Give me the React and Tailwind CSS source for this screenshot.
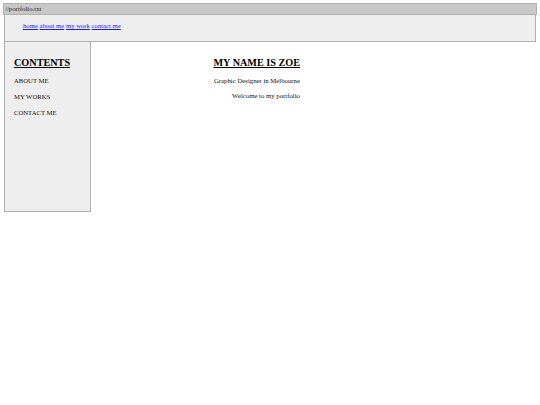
export default function App() {
  return (
    <div className="w-[540px] h-[405px] bg-white font-['Liberation_Serif',_'Times_New_Roman',_serif] text-black">
      <div className="pt-[3px] px-[3px]">
        <div className="h-[12px] bg-[#c8c8c8] border border-[#b0b0b0] text-[6.8px] leading-[10px] pl-px text-[#222]">
          //portfolio.txt
        </div>
      </div>
      <div className="mx-[4px] h-[27px] bg-[#eeeeee] border border-t-0 border-[#b0b0b0] flex items-center pl-[18px] pb-[4px]">
        <nav className="flex gap-[1.7px] text-[6.7px] leading-[8px]">
          <a href="#" className="text-[#1a1aee] underline">home</a>
          <a href="#" className="text-[#1a1aee] underline">about me</a>
          <a href="#" className="text-[#1a1aee] underline">my work</a>
          <a href="#" className="text-[#1a1aee] underline">contact me</a>
        </nav>
      </div>
      <div className="flex">
        <aside className="ml-[4px] w-[87px] h-[170px] bg-[#eeeeee] border border-t-0 border-[#b0b0b0] pl-[9px] pt-[15px]">
          <h2 className="text-[10.2px] leading-[12px] font-bold underline">CONTENTS</h2>
          <ul className="mt-[4px] text-[6.7px] leading-[16px] text-[#111]">
            <li>ABOUT ME</li>
            <li>MY WORKS</li>
            <li>CONTACT ME</li>
          </ul>
        </aside>
        <main className="w-[209px] flex flex-col items-end pt-[15px]">
          <h1 className="text-[10.2px] leading-[12px] font-bold underline">MY NAME IS ZOE</h1>
          <p className="mt-[5px] text-[6.75px] leading-[14px] text-[#111]">Graphic Designer in Melbourne</p>
          <p className="mt-[1px] text-[6.75px] leading-[14px] text-[#111]">Welcome to my portfolio</p>
        </main>
      </div>
    </div>
  );
}
